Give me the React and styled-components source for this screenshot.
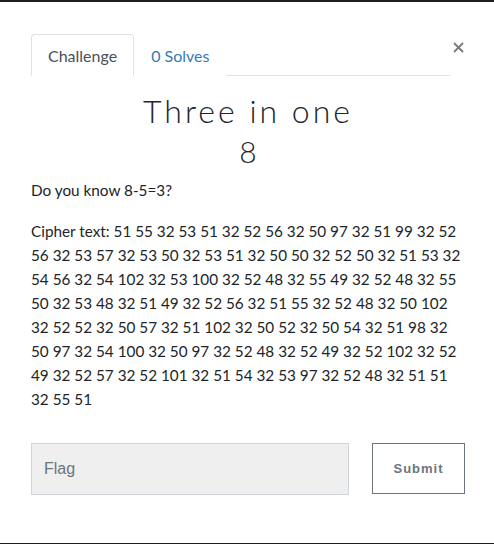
import React from "react";
import styled, { createGlobalStyle } from "styled-components";

const GlobalStyle = createGlobalStyle`
    html, body {
        margin: 0;
        padding: 0;
        background: #1b1e22;
    }
    body {
        padding: 2px 0 1px;
    }
`;

const Modal = styled.div`
    background: #ffffff;
    height: 541px;
    box-sizing: border-box;
    padding: 32px 29px 0 31px;
    font-family: "Lato", "Noto Sans", sans-serif;
    color: #212529;
`;

const Header = styled.div`
    display: flex;
    align-items: flex-start;
`;

const Nav = styled.div`
    flex: 1;
    display: flex;
    border-bottom: 1px solid #dee2e6;
    height: 41px;
`;

const Tab = styled.div`
    box-sizing: border-box;
    height: 42px;
    padding: 0 16px;
    display: flex;
    align-items: center;
    font-size: 16px;
    color: ${({ active }) => (active ? "#495057" : "#337ab7")};
    border: 1px solid ${({ active }) => (active ? "#dee2e6" : "transparent")};
    border-bottom-color: ${({ active }) => (active ? "#ffffff" : "transparent")};
    border-radius: 4px 4px 0 0;
    background: #fff;
`;

const Close = styled.button`
    width: 14px;
    margin-left: 1px;
    margin-top: 8px;
    padding: 0;
    border: 0;
    background: none;
    display: flex;
    justify-content: center;
`;

const Title = styled.h3`
    margin: 15px 0 0;
    text-align: center;
    font-weight: 300;
    font-size: 32px;
    letter-spacing: 3px;
    line-height: 40px;
    color: #212529;
`;

const Value = styled.h4`
    margin: 3px 0 0;
    text-align: center;
    font-weight: 300;
    font-size: 30px;
    line-height: 34px;
    color: #212529;
`;

const Text = styled.p`
    margin: ${({ first }) => (first ? "10px" : "0")} 0 17px;
    font-size: 15.3px;
    line-height: 24px;
    color: #212529;
    padding-right: 2px;
`;

const FormRow = styled.div`
    display: flex;
    align-items: flex-start;
    margin-top: 32px;
`;

const FlagInput = styled.input`
    box-sizing: border-box;
    width: 318px;
    height: 52px;
    padding: 0 12px;
    background: #efefef;
    border: 1px solid #ced4da;
    font-family: "Liberation Sans", Arial, sans-serif;
    font-size: 16px;
    color: #495057;
    outline: none;
    &::placeholder {
        color: #6c757d;
    }
`;

const SubmitButton = styled.button`
    box-sizing: border-box;
    margin-left: 23px;
    width: 93px;
    height: 51px;
    background: #fff;
    border: 1px solid #6c757d;
    color: #6c757d;
    font-family: "Liberation Sans", Arial, sans-serif;
    font-weight: 700;
    font-size: 13px;
    letter-spacing: 1px;
`;

const cipher =
    "51 55 32 53 51 32 52 56 32 50 97 32 51 99 32 52 56 32 53 57 32 53 50 32 53 51 32 50 50 32 52 50 32 51 53 32 54 56 32 54 102 32 53 100 32 52 48 32 55 49 32 52 48 32 55 50 32 53 48 32 51 49 32 52 56 32 51 55 32 52 48 32 50 102 32 52 52 32 50 57 32 51 102 32 50 52 32 50 54 32 51 98 32 50 97 32 54 100 32 50 97 32 52 48 32 52 49 32 52 102 32 52 49 32 52 57 32 52 101 32 51 54 32 53 97 32 52 48 32 51 51 32 55 51";

export default function App() {
    return (
        <>
            <GlobalStyle />
            <Modal>
                <Header>
                    <Nav>
                        <Tab active>Challenge</Tab>
                        <Tab>0 Solves</Tab>
                    </Nav>
                    <Close aria-label="Close">
                        <svg width="11" height="11" viewBox="0 0 11 11">
                            <path d="M1 1 L10 10 M10 1 L1 10" stroke="#7a7a7a" strokeWidth="1.8" />
                        </svg>
                    </Close>
                </Header>
                <Title>Three in one</Title>
                <Value>8</Value>
                <Text first>Do you know 8-5=3?</Text>
                <Text>Cipher text: {cipher}</Text>
                <FormRow>
                    <FlagInput placeholder="Flag" />
                    <SubmitButton>Submit</SubmitButton>
                </FormRow>
            </Modal>
        </>
    );
}
